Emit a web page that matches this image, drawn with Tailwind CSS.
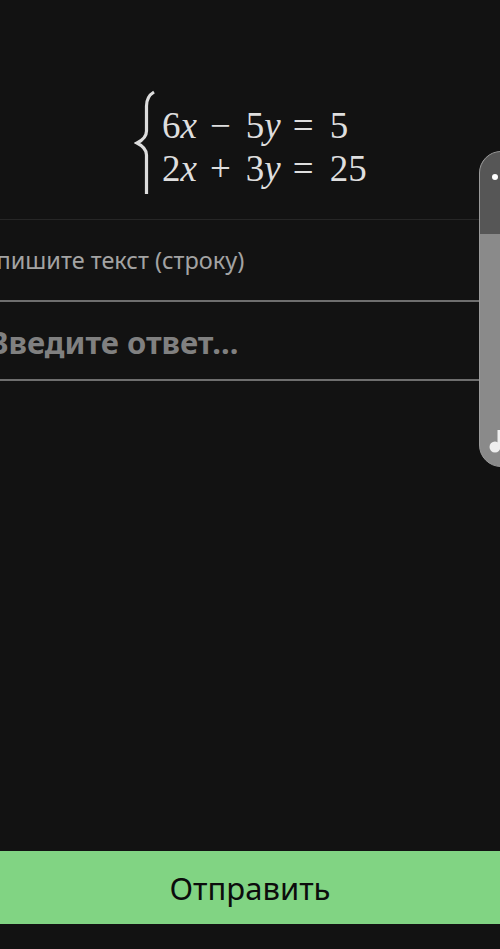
<!DOCTYPE html>
<html>
<head>
<meta charset="utf-8">
<script src="https://cdn.jsdelivr.net/npm/@tailwindcss/browser@4"></script>
</head>
<body class="bg-[#121212]">
<div class="relative w-[500px] h-[949px] overflow-hidden bg-[#121212] flex flex-col font-['Noto_Sans',sans-serif]">
  <div class="h-[220px] shrink-0 flex items-start pt-[89px] pl-[134px] border-b border-[#262626]">
    <svg class="w-[24px] h-[108px] shrink-0" viewBox="0 0 24 108" fill="none"><path d="M20 3C15 6 12.500 10 12.500 17V42C12.500 48 9 51 3 54C9 57 12.500 60 12.500 66V105" stroke="#dcdcdc" stroke-width="3.200"/></svg>
    <div class="ml-[4px] mt-[15px] flex flex-col font-['Liberation_Serif',serif] text-[37px] leading-[43px] text-[#dedede] whitespace-nowrap">
      <div class="flex"><span>6<i>x</i></span><span class="ml-[13px]">−</span><span class="ml-[15px]">5<i>y</i></span><span class="ml-[12px]">=</span><span class="ml-[16px]">5</span></div>
      <div class="flex"><span>2<i>x</i></span><span class="ml-[13px]">+</span><span class="ml-[15px]">3<i>y</i></span><span class="ml-[12px]">=</span><span class="ml-[16px]">25</span></div>
    </div>
  </div>
  <div class="h-[82px] shrink-0 flex items-center -ml-[34px] w-[534px] pt-[2px] text-[23.5px] text-[#a3a3a3] whitespace-nowrap border-b-2 border-[#6e6e6e]">Напишите текст (строку)</div>
  <div class="h-[79px] shrink-0 flex items-center -ml-[12px] w-[512px] pt-[4px] text-[31px] font-bold text-[#808080] whitespace-nowrap border-b-2 border-[#6e6e6e]">Введите ответ...</div>
  <div class="mt-[470px] h-[73px] shrink-0 bg-[#81d483] flex items-center justify-center pt-[2px] text-[31px] text-[#0c0c0c]">Отправить</div>
  <div class="absolute left-[479px] top-[151px] w-[60px] h-[316px] rounded-[22px] overflow-hidden flex flex-col bg-[#8a8a8a] border border-[#9a9a9a]">
    <div class="h-[82px] bg-[#565656] shrink-0"></div>
    <div class="flex-1"></div>
    <div class="absolute left-[12px] top-[22px] w-[6px] h-[6px] rounded-full bg-white"></div>
    <svg class="absolute left-[9px] top-[274px] w-[12px] h-[28px]" viewBox="0 0 12 28" fill="#eeeeee"><circle cx="6" cy="21" r="5.500"/><rect x="8.500" y="4" width="3.500" height="17"/></svg>
  </div>
</div>
</body>
</html>
